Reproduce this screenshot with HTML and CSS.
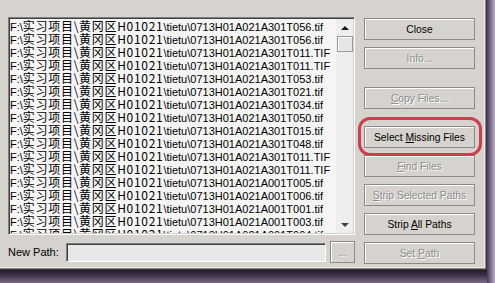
FILE: index.html
```html
<!DOCTYPE html>
<html lang="zh">
<head>
    <meta charset="UTF-8">
    <title>Bitmap Path Editor</title>
    <link rel="stylesheet" href="styles.css">
</head>
<body>
    <div class="screen">
        <div class="window">
            <div class="left">
                <div class="listbox">
                    <div class="rows">
                        <div class="row">F:\<span class="cn">实习项目\黄冈区H01021</span>\tietu\0713H01A021A301T056.tif</div>
                        <div class="row">F:\<span class="cn">实习项目\黄冈区H01021</span>\tietu\0713H01A021A301T056.tif</div>
                        <div class="row">F:\<span class="cn">实习项目\黄冈区H01021</span>\tietu\0713H01A021A301T011.TIF</div>
                        <div class="row">F:\<span class="cn">实习项目\黄冈区H01021</span>\tietu\0713H01A021A301T011.TIF</div>
                        <div class="row">F:\<span class="cn">实习项目\黄冈区H01021</span>\tietu\0713H01A021A301T053.tif</div>
                        <div class="row">F:\<span class="cn">实习项目\黄冈区H01021</span>\tietu\0713H01A021A301T021.tif</div>
                        <div class="row">F:\<span class="cn">实习项目\黄冈区H01021</span>\tietu\0713H01A021A301T034.tif</div>
                        <div class="row">F:\<span class="cn">实习项目\黄冈区H01021</span>\tietu\0713H01A021A301T050.tif</div>
                        <div class="row">F:\<span class="cn">实习项目\黄冈区H01021</span>\tietu\0713H01A021A301T015.tif</div>
                        <div class="row">F:\<span class="cn">实习项目\黄冈区H01021</span>\tietu\0713H01A021A301T048.tif</div>
                        <div class="row">F:\<span class="cn">实习项目\黄冈区H01021</span>\tietu\0713H01A021A301T011.TIF</div>
                        <div class="row">F:\<span class="cn">实习项目\黄冈区H01021</span>\tietu\0713H01A021A301T011.TIF</div>
                        <div class="row">F:\<span class="cn">实习项目\黄冈区H01021</span>\tietu\0713H01A021A001T005.tif</div>
                        <div class="row">F:\<span class="cn">实习项目\黄冈区H01021</span>\tietu\0713H01A021A001T006.tif</div>
                        <div class="row">F:\<span class="cn">实习项目\黄冈区H01021</span>\tietu\0713H01A021A001T001.tif</div>
                        <div class="row">F:\<span class="cn">实习项目\黄冈区H01021</span>\tietu\0713H01A021A001T003.tif</div>
                        <div class="row">F:\<span class="cn">实习项目\黄冈区H01021</span>\tietu\0713H01A021A001T004.tif</div>
                    </div>
                    <div class="scrollbar">
                        <span class="arrow up"></span>
                        <span class="thumb"></span>
                        <span class="track"></span>
                        <span class="arrow down"></span>
                    </div>
                </div>
                <div class="path-row">
                    <label class="path-label">New Path:</label>
                    <div class="path-input"></div>
                    <button class="btn browse" disabled>...</button>
                </div>
            </div>

            <div class="buttons">
                <button class="btn">Close</button>
                <button class="btn" disabled>Info...</button>
                <button class="btn group-start" disabled><u>C</u>opy Files...</button>
                <button class="btn group-missing">Select <u>M</u>issing Files</button>
                <button class="btn" disabled><u>F</u>ind Files</button>
                <button class="btn" disabled><u>S</u>trip Selected Paths</button>
                <button class="btn">Strip <u>A</u>ll Paths</button>
                <button class="btn" disabled>Set <u>P</u>ath</button>
            </div>

            <!-- red annotation drawn around the button -->
            <div class="callout"></div>
        </div>
        <div class="desktop-right"></div>
        <div class="desktop-bottom"></div>
    </div>
</body>
</html>
```

FILE: styles.css
```css
* {
    margin: 0;
    padding: 0;
    box-sizing: border-box;
}

body {
    font-family: 'Liberation Sans', 'Noto Sans CJK SC', sans-serif;
    background: #2c2434;
    width: 495px;
    height: 283px;
    overflow: hidden;
}

.screen {
    display: grid;
    grid-template-columns: 487px 8px;
    grid-template-rows: 270px 13px;
}

.window {
    grid-column: 1;
    grid-row: 1;
    position: relative;
    display: flex;
    padding: 17px 0 0 8px;
    background: #d6d3ce;
    box-shadow: inset -1px -1px 0 #3c3840, inset -2px -2px 0 #8c8890, inset -3px -3px 0 #ecebe8;
}

.desktop-right {
    grid-column: 2;
    grid-row: 1 / 3;
    background: linear-gradient(90deg, #4a3c58 0%, #7a6a8c 45%, #b8b0c0 100%);
}

.desktop-bottom {
    grid-column: 1;
    grid-row: 2;
    background: linear-gradient(180deg, #241c2a 0%, #3e3048 40%, #7c6c84 100%);
}

.left {
    width: 347px;
    display: flex;
    flex-direction: column;
}

.listbox {
    height: 218px;
    display: flex;
    background: #f5f5f5;
    border: 1px solid;
    border-color: #808080 #ffffff #ffffff #808080;
    box-shadow: inset 1px 1px 0 #404040, inset -1px -1px 0 #d6d3ce;
    padding: 1px;
}

.rows {
    flex: 1;
    min-width: 0;
    overflow: hidden;
    font-size: 11px;
    color: #000;
}

.row {
    height: 13px;
    line-height: 13px;
    white-space: nowrap;
}

.cn {
    line-height: 13px;
    font-family: 'Noto Sans CJK SC', sans-serif;
    font-size: 12px;
    letter-spacing: 0.7px;
}

.scrollbar {
    width: 17px;
    flex: none;
    display: flex;
    flex-direction: column;
    align-items: center;
    background: #eeeeee;
}

.arrow {
    width: 17px;
    height: 17px;
    display: flex;
    align-items: center;
    justify-content: center;
}

.arrow::after {
    content: '';
    border-left: 4px solid transparent;
    border-right: 4px solid transparent;
}

.arrow.up::after {
    border-bottom: 4px solid #1a1a1a;
}

.arrow.down::after {
    border-top: 4px solid #404040;
}

.thumb {
    width: 16px;
    height: 16px;
    background: #e6e6e6;
    border: 1px solid #9a9a9a;
    box-shadow: inset 1px 1px 0 #ffffff;
}

.track {
    flex: 1;
}

.path-row {
    display: flex;
    align-items: center;
    margin-top: 6px;
    height: 22px;
}

.path-label {
    width: 58px;
    font-size: 11px;
    color: #000;
}

.path-input {
    width: 260px;
    height: 19px;
    background: #e8e8e8;
    border: 1px solid;
    border-color: #808080 #ffffff #ffffff #808080;
    box-shadow: inset 1px 1px 0 #404040;
}

.btn {
    height: 22px;
    flex: none;
    font-family: 'Liberation Sans', sans-serif;
    font-size: 10.3px;
    color: #000;
    background: #d6d3ce;
    border: 1px solid #8c8a88;
    box-shadow: inset 1px 1px 0 #ffffff;
    margin-top: 7px;
}

.btn:disabled {
    color: #8c8c8c;
    text-shadow: 1px 1px 0 #ffffff;
}

.btn u {
    text-underline-offset: 1px;
}

.browse {
    width: 25px;
    margin: 0 0 0 4px;
}

.buttons {
    width: 111px;
    flex: none;
    margin-left: 9px;
    padding-top: 1px;
    display: flex;
    flex-direction: column;
}

.buttons .btn:first-child {
    margin-top: 0;
}

.buttons .group-start {
    margin-top: 18px;
}

.buttons .group-missing {
    margin-top: 17px;
}

.callout {
    position: absolute;
    left: 358px;
    top: 117px;
    width: 124px;
    height: 39px;
    border: 3px solid #c8404e;
    border-radius: 12px;
}
```
